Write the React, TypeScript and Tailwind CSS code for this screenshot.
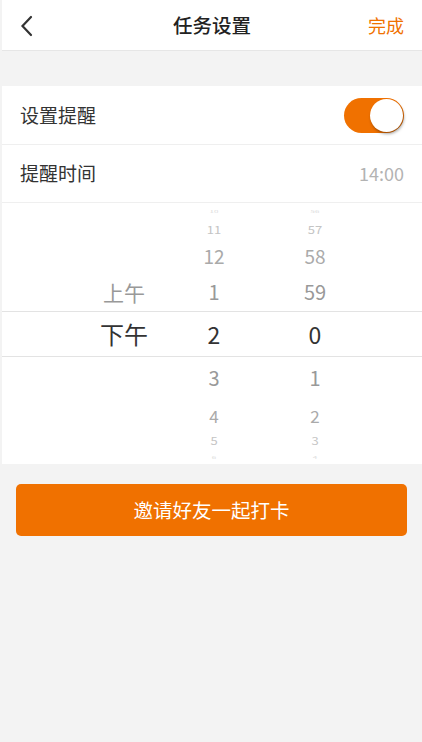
import React from "react";

const font = { fontFamily: '"Noto Sans CJK SC", "Noto Sans", sans-serif' };

type Cell = { a?: string; h?: string; m?: string };

function Row({ h, cells, cls, acls }: { h: string; cells: Cell; cls: string; acls?: string }) {
  return (
    <div className={`flex items-center pl-[77px] ${h}`}>
      <div className={`w-[90px] text-center leading-none ${acls ?? cls}`}>{cells.a ?? ""}</div>
      <div className={`w-[90px] text-center leading-none ${cls}`}>{cells.h ?? ""}</div>
      <div className={`ml-[11px] w-[90px] text-center leading-none ${cls}`}>{cells.m ?? ""}</div>
    </div>
  );
}

export default function App() {
  return (
    <div style={font} className="w-[422px] h-[742px] bg-[#f3f3f3] pl-[2px] overflow-hidden">
      {/* header */}
      <div className="h-[51px] bg-white border-b border-[#e6e6e6] flex items-center justify-between pl-[17px] pr-[18px] relative">
        <svg width="16" height="24" viewBox="0 0 16 24" className="mt-[1px]">
          <path d="M12 3 L3.5 12 L12 21" fill="none" stroke="#333" strokeWidth="2.2" strokeLinecap="round" strokeLinejoin="miter" />
        </svg>
        <div className="absolute left-0 right-0 text-center text-[19.5px] font-medium text-[#222] pointer-events-none">任务设置</div>
        <div className="text-[18px] text-[#f07100]">完成</div>
      </div>
      <div className="h-[35px]" />
      {/* rows */}
      <div className="bg-white">
        <div className="h-[59px] flex items-center justify-between pl-[18px] pr-[18px] border-b border-[#efefef]">
          <span className="text-[19px] text-[#333]">设置提醒</span>
          <div className="w-[60px] h-[35px] rounded-full bg-[#f07100] relative">
            <div className="absolute right-[1px] top-[1px] w-[33px] h-[33px] rounded-full bg-white shadow-[1px_2px_3px_rgba(0,0,0,0.35)]" />
          </div>
        </div>
        <div className="h-[58px] flex items-center justify-between pl-[18px] pr-[18px] border-b border-[#efefef]">
          <span className="text-[19px] text-[#333]">提醒时间</span>
          <span className="text-[18px] text-[#b3b3b3]">14:00</span>
        </div>
        {/* picker */}
        <div className="h-[261px]">
          <Row h="h-[18px]" cells={{ h: "10", m: "56" }} cls="text-[8px] text-[#ddd] scale-y-[0.4]" />
          <Row h="h-[16px]" cells={{ h: "11", m: "57" }} cls="text-[13px] text-[#c4c4c4] scale-y-[0.85]" />
          <Row h="h-[36px]" cells={{ h: "12", m: "58" }} cls="text-[19px] text-[#aaa]" />
          <Row h="h-[38px]" cells={{ a: "上午", h: "1", m: "59" }} cls="text-[20px] text-[#999]" acls="text-[21px] text-[#999]" />
          <div className="border-y border-[#e3e3e3]">
            <Row h="h-[44px]" cells={{ a: "下午", h: "2", m: "0" }} cls="text-[23px] text-[#333]" acls="text-[24px] text-[#333]" />
          </div>
          <Row h="h-[42px]" cells={{ h: "3", m: "1" }} cls="text-[20px] text-[#999]" />
          <Row h="h-[32px]" cells={{ h: "4", m: "2" }} cls="text-[17px] text-[#aaa]" />
          <Row h="h-[19px]" cells={{ h: "5", m: "3" }} cls="text-[13px] text-[#c4c4c4] scale-y-[0.8]" />
          <Row h="h-[15px]" cells={{ h: "6", m: "4" }} cls="text-[8px] text-[#ddd] scale-y-[0.4]" />
        </div>
      </div>
      {/* button */}
      <div className="pt-[20px] pl-[14px] pr-[15px]">
        <div className="h-[52px] rounded-[5px] bg-[#f07100] flex items-center justify-center text-white text-[19.5px]">
          邀请好友一起打卡
        </div>
      </div>
    </div>
  );
}
